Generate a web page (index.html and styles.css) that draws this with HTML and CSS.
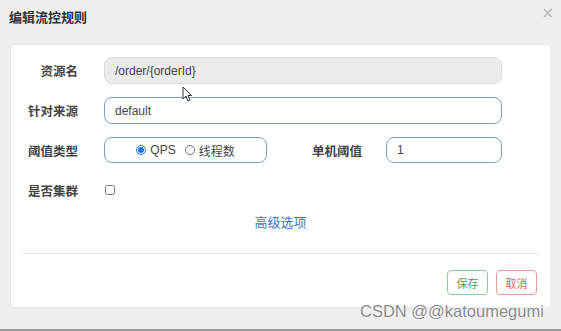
FILE: index.html
```html
<!DOCTYPE html>
<html lang="zh-CN">
<head>
    <meta charset="UTF-8">
    <title>编辑流控规则</title>
    <link rel="stylesheet" href="styles.css">
</head>
<body>
    <div class="dialog">
        <!-- En-tête -->
        <div class="dialog-header">
            <h3>编辑流控规则</h3>
            <span class="close">&times;</span>
        </div>

        <!-- Formulaire -->
        <div class="card">
            <div class="form">
                <div class="row row-tall">
                    <label class="label">资源名</label>
                    <input class="field field-wide" type="text" value="/order/{orderId}" disabled>
                </div>
                <div class="row row-tall">
                    <label class="label">针对来源</label>
                    <input class="field field-wide" type="text" value="default">
                </div>
                <div class="row">
                    <label class="label">阈值类型</label>
                    <div class="radio-box">
                        <label class="choice"><input type="radio" name="grade" checked> QPS</label>
                        <label class="choice"><input type="radio" name="grade"> 线程数</label>
                    </div>
                    <label class="label label-mid">单机阈值</label>
                    <input class="field field-small" type="text" value="1">
                </div>
                <div class="row">
                    <label class="label">是否集群</label>
                    <input class="check" type="checkbox">
                </div>
                <a class="advanced" href="#">高级选项</a>
            </div>

            <div class="separator"></div>

            <div class="actions">
                <button class="btn btn-save">保存</button>
                <button class="btn btn-cancel">取消</button>
            </div>
        </div>
    </div>

    <div class="footer"></div>

    <!-- Curseur de la souris -->
    <svg class="cursor" viewBox="0 0 10 16" width="10" height="16">
        <path d="M1 1 L1 13 L4 10 L6 15 L8 14 L6 9.5 L9.5 9.5 Z" fill="#fff" stroke="#333" stroke-width="1" stroke-linejoin="round"></path>
    </svg>

    <div class="watermark">CSDN @@katoumegumi</div>
</body>
</html>
```

FILE: styles.css
```css
* {
    margin: 0;
    padding: 0;
    box-sizing: border-box;
}

body {
    width: 561px;
    height: 331px;
    background-color: #efefef;
    font-family: 'Liberation Sans', 'Noto Sans CJK SC', sans-serif;
    color: #333;
    position: relative;
    overflow: hidden;
    display: flex;
    flex-direction: column;
}

.dialog {
    flex: 1;
}

/* En-tête */
.dialog-header {
    height: 44px;
    display: flex;
    justify-content: space-between;
    align-items: flex-start;
    padding: 8px 7px 0 9px;
}

.dialog-header h3 {
    font-family: 'Noto Sans CJK SC', sans-serif;
    font-size: 13px;
    font-weight: 700;
    line-height: 18px;
    color: #333;
}

.close {
    font-size: 15px;
    line-height: 10px;
    color: #b5b5b5;
    font-family: 'DejaVu Sans', sans-serif;
}

/* Carte */
.card {
    margin-left: 10px;
    width: 541px;
    height: 264px;
    background-color: #fff;
    border: 1px solid #e6e6e6;
    border-radius: 4px;
    padding-top: 12px;
}

.form {
    display: flex;
    flex-direction: column;
}

.row {
    display: flex;
    align-items: center;
    height: 26px;
    margin-bottom: 14px;
}

.row-tall {
    height: 27px;
    margin-bottom: 12px;
}

.row-tall + .row {
    margin-top: 1px;
}

.label {
    width: 67px;
    margin-right: 26px;
    text-align: right;
    font-family: 'Noto Sans CJK SC', sans-serif;
    font-size: 12.5px;
    font-weight: 700;
    color: #444;
}

.label-mid {
    width: 95px;
    margin-right: 24px;
}

.field {
    height: 100%;
    border: 1px solid #7f9fc0;
    border-radius: 8px;
    padding: 0 10px;
    font-family: 'Liberation Sans', 'Noto Sans CJK SC', sans-serif;
    font-size: 12px;
    color: #444;
    background-color: #fff;
    outline: none;
}

.field:disabled {
    background-color: #ececec;
    border-color: #dcdcdc;
}

.field-wide {
    width: 398px;
}

.field-small {
    width: 116px;
}

.radio-box {
    width: 163px;
    height: 100%;
    border: 1px solid #7f9fc0;
    border-radius: 8px;
    display: flex;
    justify-content: center;
    align-items: center;
    gap: 9px;
}

.choice {
    display: flex;
    align-items: center;
    gap: 4px;
    font-family: 'Liberation Sans', 'Noto Sans CJK SC', sans-serif;
    font-size: 12px;
    color: #444;
}

.choice input {
    width: 10px;
    height: 10px;
    margin: 0;
    accent-color: #1a73e8;
}

.check {
    width: 10px;
    height: 10px;
    margin: 0 0 0 1px;
}

.advanced {
    align-self: center;
    margin-top: -5px;
    font-family: 'Noto Sans CJK SC', sans-serif;
    font-size: 13px;
    line-height: 20px;
    color: #3a7bbf;
    text-decoration: none;
}

.separator {
    margin: 21px 11px 0 11px;
    border-top: 1px solid #e8e8e8;
}

/* Boutons */
.actions {
    display: flex;
    justify-content: flex-end;
    gap: 8px;
    padding: 16px 13px 0 0;
}

.btn {
    width: 41px;
    height: 25px;
    background-color: #fff;
    border-radius: 4px;
    font-family: 'Noto Sans CJK SC', sans-serif;
    font-size: 11px;
    cursor: pointer;
}

.btn-save {
    border: 1px solid #8ccb9c;
    color: #4aa262;
}

.btn-cancel {
    border: 1px solid #e59a9a;
    color: #dc615d;
}

.footer {
    height: 2px;
    background-color: #9a9a9a;
}

.cursor {
    position: absolute;
    left: 182px;
    top: 86px;
}

.watermark {
    position: absolute;
    left: 360px;
    top: 302px;
    font-family: 'Liberation Sans', sans-serif;
    font-size: 16.5px;
    color: #8a8a8a;
    text-shadow: 0 0 2px #fff, 0 0 2px #fff;
}
```
